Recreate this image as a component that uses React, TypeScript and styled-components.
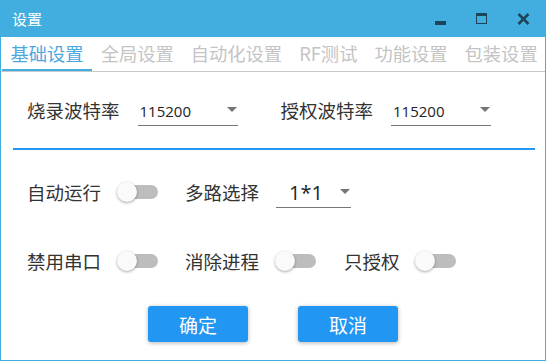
import React from "react";
import styled, { createGlobalStyle } from "styled-components";

const GlobalStyle = createGlobalStyle`
  html, body { margin: 0; padding: 0; background: #fff; }
  body { font-family: "Noto Sans CJK SC", "Noto Sans", sans-serif; }
`;

const tabs = ["基础设置", "全局设置", "自动化设置", "RF测试", "功能设置", "包装设置"];

function Switch() {
  return (
    <SwitchBox>
      <Track />
      <Thumb />
    </SwitchBox>
  );
}

function Select({ value, width, big }: { value: string; width: number; big?: boolean }) {
  return (
    <SelectBox style={{ width }}>
      <SelectValue $big={big}>{value}</SelectValue>
      <Arrow />
    </SelectBox>
  );
}

function App() {
  return (
    <Window>
      <GlobalStyle />
      <TitleBar>
        <Title>设置</Title>
        <Controls>
          <MinIcon />
          <MaxIcon />
          <svg width="13" height="12" viewBox="0 0 13 12">
            <path d="M1.5 1 L11.5 11 M11.5 1 L1.5 11" stroke="#1d4559" strokeWidth="2.6" />
          </svg>
        </Controls>
      </TitleBar>
      <TabBar>
        {tabs.map((t, i) => (
          <Tab key={t} $active={i === 0}>
            {t}
          </Tab>
        ))}
      </TabBar>
      <Body>
        <Row $h={76}>
          <Label $gap={18}>烧录波特率</Label>
          <Select value="115200" width={100} />
          <Label $gap={18} style={{ marginLeft: 43 }}>
            授权波特率
          </Label>
          <Select value="115200" width={100} />
        </Row>
        <Divider />
        <Row $h={84}>
          <Label $gap={16}>自动运行</Label>
          <Switch />
          <Label $gap={17} style={{ marginLeft: 27 }}>
            多路选择
          </Label>
          <Select value="1*1" width={75} big />
        </Row>
        <Row $h={54}>
          <Label $gap={16}>禁用串口</Label>
          <Switch />
          <Label $gap={16} style={{ marginLeft: 27 }}>
            消除进程
          </Label>
          <Switch />
          <Label $gap={15} style={{ marginLeft: 28 }}>
            只授权
          </Label>
          <Switch />
        </Row>
        <Buttons>
          <Button>确定</Button>
          <Button>取消</Button>
        </Buttons>
      </Body>
    </Window>
  );
}

const Window = styled.div`
  width: 546px;
  height: 361px;
  box-sizing: border-box;
  border: 1px solid #42aedf;
  border-top: none;
  background: #fff;
  display: flex;
  flex-direction: column;
  overflow: hidden;
`;

const TitleBar = styled.div`
  height: 37px;
  flex: none;
  margin: 0 -1px;
  background: #42aedf;
  display: flex;
  align-items: center;
  justify-content: space-between;
  padding: 0 16px 0 12px;
`;

const Title = styled.div`
  color: #fff;
  font-size: 15px;
  line-height: 1;
`;

const Controls = styled.div`
  display: flex;
  align-items: center;
  gap: 30px;
  svg { display: block; }
`;

const MinIcon = styled.div`
  width: 11px;
  height: 4px;
  background: #1d4559;
  margin-top: 9px;
`;

const MaxIcon = styled.div`
  width: 11px;
  height: 11px;
  box-sizing: border-box;
  border: 1.5px solid #1d4559;
  border-top-width: 3px;
`;

const TabBar = styled.div`
  display: flex;
  flex: none;
  padding-left: 1px;
  height: 35px;
  border-bottom: 1px solid #c8c8c8;
  box-sizing: border-box;
  overflow: hidden;
`;

const Tab = styled.div<{ $active?: boolean }>`
  flex: none;
  white-space: nowrap;
  padding: 0 8.5px;
  font-size: 18.3px;
  display: flex;
  align-items: center;
  color: ${(p) => (p.$active ? "#4aa8df" : "#c4c4c4")};
  border-bottom: 3px solid ${(p) => (p.$active ? "#42aedf" : "transparent")};
  margin-bottom: -1px;
`;

const Body = styled.div`
  padding: 0 9px 0 11px;
  display: flex;
  flex-direction: column;
`;

const Row = styled.div<{ $h: number }>`
  height: ${(p) => p.$h}px;
  display: flex;
  align-items: center;
  padding-left: 15px;
`;

const Label = styled.span<{ $gap: number }>`
  font-size: 18.5px;
  color: #333;
  margin-right: ${(p) => p.$gap}px;
  white-space: nowrap;
`;

const SelectBox = styled.div`
  height: 32px;
  flex: none;
  box-sizing: border-box;
  border-bottom: 1px solid #777;
  display: flex;
  align-items: center;
  justify-content: space-between;
  padding: 0 1px 0 2px;
`;

const SelectValue = styled.span<{ $big?: boolean }>`
  font-family: "Open Sans", "Noto Sans", sans-serif;
  font-size: ${(p) => (p.$big ? "20px" : "15px")};
  padding-left: ${(p) => (p.$big ? "11px" : "0")};
  color: #222;
  margin-top: 2px;
`;

const Arrow = styled.div`
  width: 0;
  height: 0;
  border-left: 5px solid transparent;
  border-right: 5px solid transparent;
  border-top: 5px solid #757575;
`;

const Divider = styled.div`
  height: 2px;
  background: #2196f3;
  margin-right: 1px;
  margin-left: 1px;
`;

const SwitchBox = styled.div`
  position: relative;
  width: 41px;
  height: 20px;
  flex: none;
`;

const Track = styled.div`
  position: absolute;
  left: 5px;
  right: 0;
  top: 3px;
  height: 14px;
  border-radius: 7px;
  background: #bdbdbd;
`;

const Thumb = styled.div`
  position: absolute;
  left: 0;
  top: 0;
  width: 20px;
  height: 20px;
  border-radius: 50%;
  background: #fafafa;
  box-shadow: 0 1px 3px rgba(0, 0, 0, 0.35);
`;

const Buttons = styled.div`
  display: flex;
  justify-content: center;
  gap: 50px;
  margin-top: 18px;
  margin-left: -2px;
`;

const Button = styled.button`
  width: 100px;
  height: 36px;
  border: none;
  border-radius: 3px;
  background: #2196f3;
  color: #fff;
  font-family: "Noto Sans CJK SC", sans-serif;
  font-size: 19px;
  box-shadow: 0 1px 4px rgba(0, 0, 0, 0.3);
  padding: 0;
`;

export default App;
